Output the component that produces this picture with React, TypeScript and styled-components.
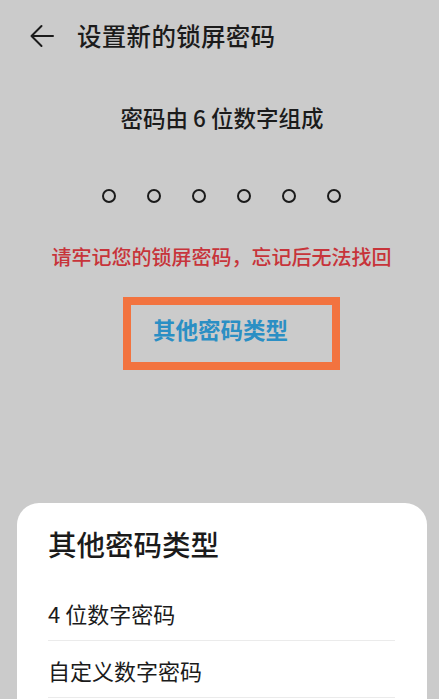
import React from "react";
import styled, { createGlobalStyle } from "styled-components";

const GlobalStyle = createGlobalStyle`
  html, body {
    margin: 0;
    padding: 0;
    background: #cbcbcb;
  }
  body {
    font-family: "Noto Sans CJK SC", "Noto Sans", sans-serif;
    color: #1b1b1b;
  }
`;

const Screen = styled.div`
  width: 439px;
  height: 699px;
  overflow: hidden;
  background: #cbcbcb;
  display: flex;
  flex-direction: column;
`;

const Header = styled.header`
  height: 72px;
  display: flex;
  align-items: center;
  padding-left: 28px;
`;

const BackButton = styled.button`
  width: 28px;
  height: 28px;
  padding: 0;
  border: none;
  background: none;
  display: flex;
  align-items: center;
  justify-content: center;
  color: #1b1b1b;
`;

const Title = styled.h1`
  margin: 0 0 0 21px;
  font-size: 24.5px;
  line-height: 32px;
  font-weight: 500;
  letter-spacing: 0.3px;
`;

const Hint = styled.p`
  margin: 30px 0 0;
  text-align: center;
  font-size: 22.5px;
  line-height: 30px;
  font-weight: 500;
  padding-left: 5px;
`;

const Dots = styled.div`
  margin-top: 57px;
  display: flex;
  justify-content: center;
  gap: 31px;
  padding-left: 3px;
`;

const Dot = styled.span`
  width: 14px;
  height: 14px;
  box-sizing: border-box;
  border: 2.5px solid #1b1b1b;
  border-radius: 50%;
`;

const Warning = styled.p`
  margin: 40px 0 0;
  text-align: center;
  font-size: 20px;
  line-height: 28px;
  font-weight: 500;
  color: #c7343a;
  padding-left: 4px;
`;

const Highlight = styled.div`
  margin: 26px 0 0 123px;
  width: 217px;
  height: 73px;
  box-sizing: border-box;
  border: 8px solid #f2733f;
  display: flex;
  align-items: center;
  padding: 0 0 10px 22px;
`;

const LinkText = styled.span`
  font-size: 22.5px;
  line-height: 30px;
  font-weight: 600;
  color: #2b8fc4;
`;

const Sheet = styled.section`
  margin: auto 12px 0 17px;
  height: 196px;
  background: #ffffff;
  border-radius: 22px 22px 0 0;
  padding: 21px 32px 0 31px;
  box-sizing: border-box;
`;

const SheetTitle = styled.h2`
  margin: 0 0 20px;
  font-size: 28.5px;
  line-height: 40px;
  font-weight: 500;
`;

const Option = styled.div`
  padding: 14px 0 12px;
  font-size: 22px;
  line-height: 30px;
  border-bottom: 1px solid #ebebeb;
`;

const options = ["4 位数字密码", "自定义数字密码"];

const App: React.FC = () => {
  return (
    <Screen>
      <GlobalStyle />
      <Header>
        <BackButton aria-label="返回">
          <svg width="26" height="24" viewBox="0 0 26 24" fill="none">
            <path
              d="M24 12H2.5M12.5 2L2.5 12l10 10"
              stroke="currentColor"
              strokeWidth="2"
              strokeLinecap="round"
              strokeLinejoin="round"
            />
          </svg>
        </BackButton>
        <Title>设置新的锁屏密码</Title>
      </Header>

      <Hint>密码由 6 位数字组成</Hint>

      <Dots>
        {Array.from({ length: 6 }).map((_, i) => (
          <Dot key={i} />
        ))}
      </Dots>

      <Warning>请牢记您的锁屏密码，忘记后无法找回</Warning>

      <Highlight>
        <LinkText>其他密码类型</LinkText>
      </Highlight>

      <Sheet>
        <SheetTitle>其他密码类型</SheetTitle>
        {options.map(o => (
          <Option key={o}>{o}</Option>
        ))}
      </Sheet>
    </Screen>
  );
};

export default App;
